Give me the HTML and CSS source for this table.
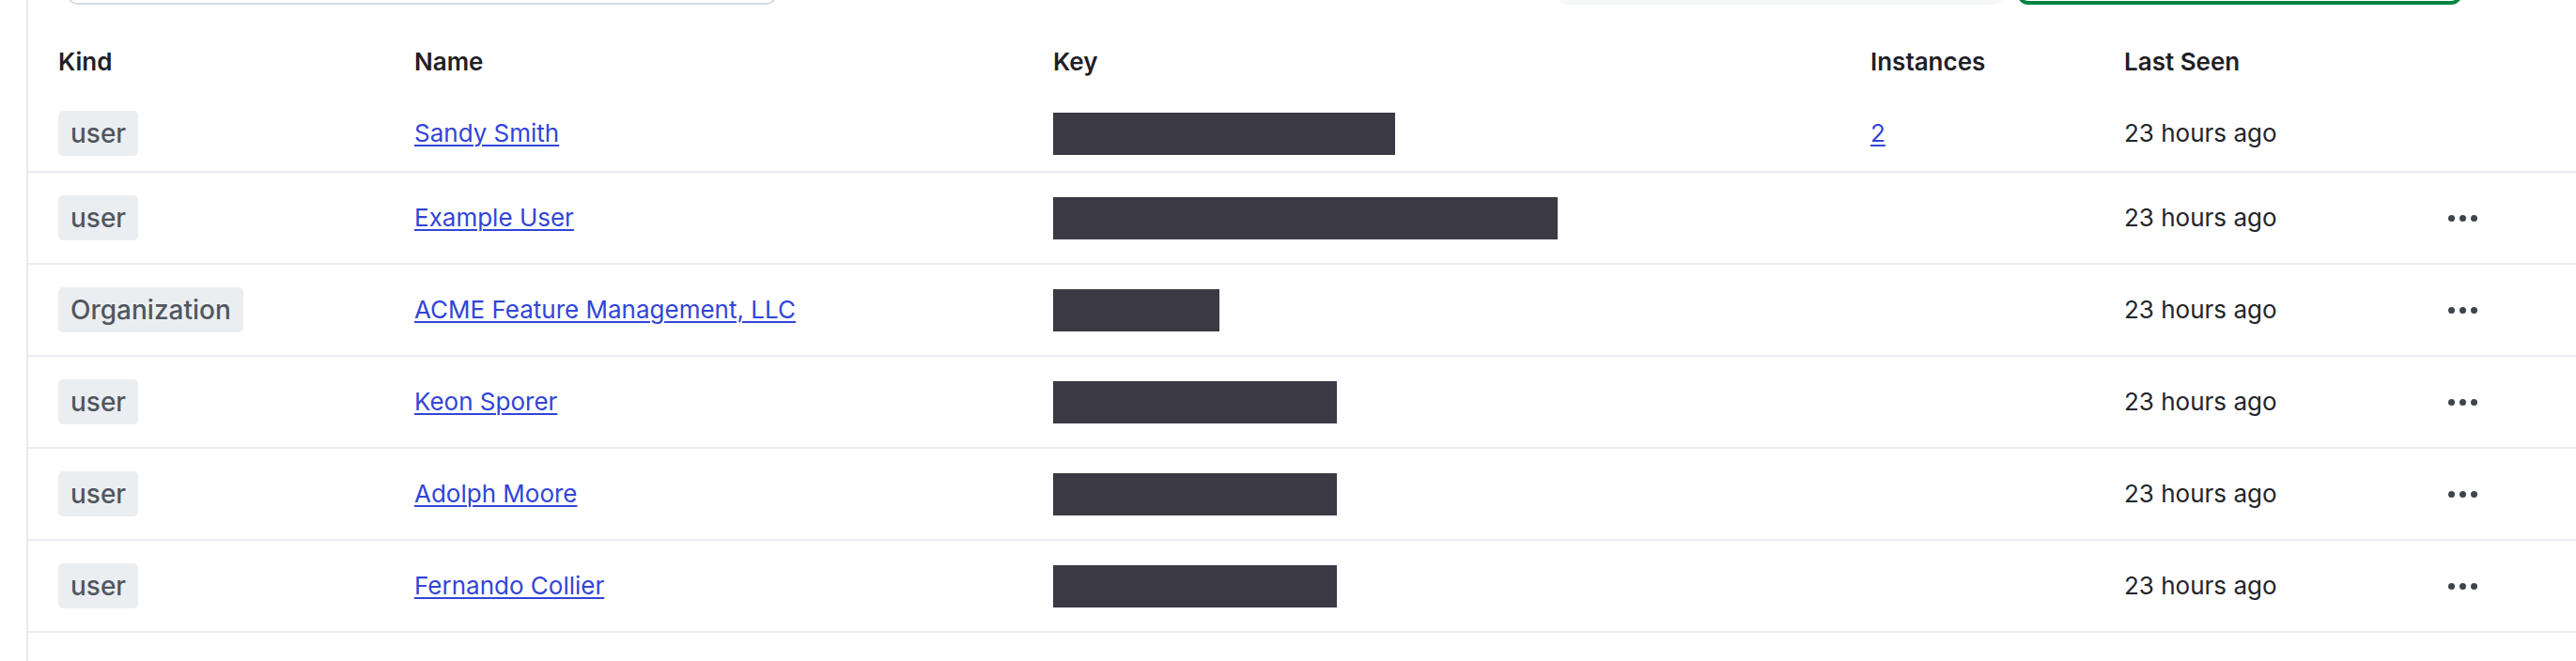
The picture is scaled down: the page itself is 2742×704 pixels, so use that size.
FILE: index.html
```html
<!DOCTYPE html>
<html lang="en">
<head>
<meta charset="utf-8">
<title>Contexts</title>
<link rel="stylesheet" href="styles.css">
</head>
<body>
<div class="main">
  <div class="toolbar">
    <div class="search"></div>
    <div class="spacer"></div>
    <div class="filter"></div>
    <div class="primary"></div>
  </div>
  <div class="table">
    <div class="row head">
      <div class="cell">Kind</div>
      <div class="cell">Name</div>
      <div class="cell">Key</div>
      <div class="cell">Instances</div>
      <div class="cell">Last Seen</div>
      <div class="cell"></div>
    </div>
    <div class="row first">
      <div class="cell"><span class="badge">user</span></div>
      <div class="cell"><a href="#" class="link">Sandy Smith</a></div>
      <div class="cell"><span class="redact" style="width:364px"></span></div>
      <div class="cell"><a href="#" class="link">2</a></div>
      <div class="cell">23 hours ago</div>
      <div class="cell"></div>
    </div>
    <div class="row">
      <div class="cell"><span class="badge">user</span></div>
      <div class="cell"><a href="#" class="link">Example User</a></div>
      <div class="cell"><span class="redact" style="width:537px"></span></div>
      <div class="cell"></div>
      <div class="cell">23 hours ago</div>
      <div class="cell"><button class="more" aria-label="More"><span></span><span></span><span></span></button></div>
    </div>
    <div class="row">
      <div class="cell"><span class="badge">Organization</span></div>
      <div class="cell"><a href="#" class="link">ACME Feature Management, LLC</a></div>
      <div class="cell"><span class="redact" style="width:177px"></span></div>
      <div class="cell"></div>
      <div class="cell">23 hours ago</div>
      <div class="cell"><button class="more" aria-label="More"><span></span><span></span><span></span></button></div>
    </div>
    <div class="row">
      <div class="cell"><span class="badge">user</span></div>
      <div class="cell"><a href="#" class="link">Keon Sporer</a></div>
      <div class="cell"><span class="redact" style="width:302px"></span></div>
      <div class="cell"></div>
      <div class="cell">23 hours ago</div>
      <div class="cell"><button class="more" aria-label="More"><span></span><span></span><span></span></button></div>
    </div>
    <div class="row">
      <div class="cell"><span class="badge">user</span></div>
      <div class="cell"><a href="#" class="link">Adolph Moore</a></div>
      <div class="cell"><span class="redact" style="width:302px"></span></div>
      <div class="cell"></div>
      <div class="cell">23 hours ago</div>
      <div class="cell"><button class="more" aria-label="More"><span></span><span></span><span></span></button></div>
    </div>
    <div class="row">
      <div class="cell"><span class="badge">user</span></div>
      <div class="cell"><a href="#" class="link">Fernando Collier</a></div>
      <div class="cell"><span class="redact" style="width:302px"></span></div>
      <div class="cell"></div>
      <div class="cell">23 hours ago</div>
      <div class="cell"><button class="more" aria-label="More"><span></span><span></span><span></span></button></div>
    </div>
  </div>
</div>
</body>
</html>
```
FILE: styles.css
```css
html, body {
  margin: 0;
  padding: 0;
  background: #ffffff;
}
body {
  font-family: Inter, "Noto Sans", sans-serif;
  font-size: 26px;
  color: #23252a;
  overflow: hidden;
  height: 704px;
}
.main {
  margin-left: 28px;
  border-left: 2px solid #e6e9ee;
  height: 759px;
  margin-top: -55px;
}
.toolbar {
  display: flex;
  align-items: flex-end;
  height: 60px;
  padding-left: 42px;
}
.search {
  width: 754px;
  height: 60px;
  box-sizing: border-box;
  border: 2px solid #d6dae0;
  border-radius: 10px;
}
.spacer {
  flex: 0 0 832px;
}
.filter {
  width: 475px;
  height: 60px;
  background: #f6f7f9;
  border-radius: 10px;
}
.primary {
  margin-left: 14px;
  width: 474px;
  height: 61px;
  box-sizing: border-box;
  border: 4px solid #00843f;
  border-radius: 12px;
}
.row {
  display: grid;
  grid-template-columns: 379px 680px 870px 270px 332px 56px;
  padding-left: 32px;
  align-items: center;
  min-height: 96px;
  border-bottom: 2px solid #e9edf1;
}
.row.head {
  min-height: 0;
  height: 97px;
  align-items: start;
  padding-top: 40px;
  box-sizing: border-box;
  border-bottom: none;
  font-weight: 600;
  color: #1f2024;
}
.row.first {
  min-height: 80px;
}
.cell {
  line-height: 42px;
}
.badge {
  display: inline-block;
  height: 48px;
  line-height: 48px;
  padding: 0 13px;
  background: #ebeef1;
  color: #51565f;
  border-radius: 5px;
  font-size: 28px;
  font-weight: 500;
  vertical-align: middle;
}
.link {
  color: #3245d8;
  text-decoration: underline;
  text-underline-offset: 3px;
  text-decoration-thickness: 2px;
}
.redact {
  display: block;
  height: 45px;
  background: #3a3944;
}
.more {
  width: 56px;
  height: 56px;
  border: none;
  background: transparent;
  padding: 0;
  display: flex;
  align-items: center;
  justify-content: center;
  gap: 5px;
  cursor: pointer;
}
.more span {
  width: 7px;
  height: 7px;
  border-radius: 50%;
  background: #3f444c;
}
```
